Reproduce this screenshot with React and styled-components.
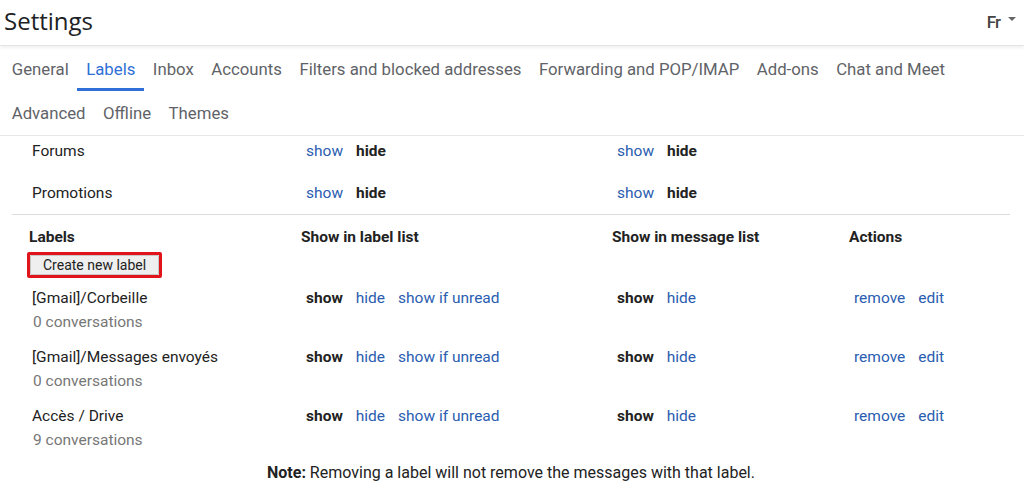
import React from "react";
import styled, { createGlobalStyle } from "styled-components";

const Global = createGlobalStyle`
  html, body { margin: 0; padding: 0; background: #fff; }
  body { font-family: Roboto, "Liberation Sans", Arial, sans-serif; color: #222; overflow: hidden; }
  * { box-sizing: border-box; }
`;

const Page = styled.div`
  width: 1024px;
  height: 491px;
  overflow: hidden;
`;

const TitleBar = styled.div`
  height: 46px;
  display: flex;
  align-items: center;
  justify-content: space-between;
  padding: 0 8px 0 4px;
  border-bottom: 1px solid #e4e4e4;
  box-shadow: 0 2px 3px rgba(0, 0, 0, 0.06);
`;

const Title = styled.h1`
  margin: 0;
  margin-top: -4px;
  font-family: "Open Sans", Roboto, sans-serif;
  font-size: 24px;
  font-weight: 400;
  color: #202124;
`;

const Account = styled.div`
  display: flex;
  align-items: center;
  gap: 8px;
  margin-top: -2px;
  font-size: 17px;
  font-weight: 500;
  color: #444;
  letter-spacing: -1px;
`;

const Caret = styled.span`
  width: 0;
  height: 0;
  border-left: 4px solid transparent;
  border-right: 4px solid transparent;
  border-top: 4px solid #666;
  margin-top: -6px;
`;

const Tabs = styled.nav`
  display: flex;
  flex-wrap: wrap;
  padding: 1px 0 0 3px;
  border-bottom: 1px solid #e8e8e8;
`;

const Break = styled.div`
  flex-basis: 100%;
`;

const Tab = styled.div`
  height: 44px;
  display: flex;
  align-items: center;
  padding: 0 8.75px;
  font-size: 16.75px;
  color: ${(p) => (p.$active ? "#2f6fd6" : "#5f6368")};
  box-shadow: ${(p) => (p.$active ? "inset 0 -3px 0 #2f6fd6" : "none")};
`;

const Content = styled.div`
  padding: 0 14px 0 12px;
  font-size: 15.5px;
`;

const Grid = styled.div`
  display: grid;
  grid-template-columns: 289px 311px 237px 1fr;
  align-items: ${(p) => p.$align || "center"};
`;

const CategoryRow = styled(Grid)`
  height: ${(p) => (p.$first ? "36px" : "42px")};
  padding-bottom: ${(p) => (p.$first ? "7px" : "0")};
`;

const Divider = styled.div`
  height: 1px;
  background: #dcdcdc;
`;

const Name = styled.div`
  padding-left: 20px;
  line-height: 24px;
  color: #222;
`;

const Count = styled.div`
  padding-left: 21px;
  line-height: 24px;
  color: #777;
`;

const Cell = styled.div`
  display: flex;
  gap: 13px;
  padding-left: 5px;
  line-height: 24px;
`;

const Link = styled.span`
  color: #2a5db0;
  cursor: pointer;
`;

const Bold = styled.span`
  font-weight: 700;
  color: #222;
`;

const HeaderRow = styled(Grid)`
  padding-top: 13px;
`;

const Head = styled.div`
  font-weight: 700;
  line-height: 18px;
  padding-left: ${(p) => p.$pad || "0"};
`;

const Highlight = styled.div`
  display: inline-block;
  margin: 6px 0 0 15px;
  border: 3px solid #e1141c;
  border-radius: 2px;
`;

const Button = styled.button`
  display: block;
  height: 20px;
  padding: 0 12px;
  font-family: Roboto, "Liberation Sans", sans-serif;
  font-size: 14px;
  color: #222;
  background: #efefef;
  border: 1px solid #c8c8c8;
  border-radius: 1px;
  line-height: 18px;
`;

const Labels = styled.div`
  padding-top: 8px;
`;

const LabelRow = styled(Grid)`
  padding-bottom: 11px;
  &:last-child { padding-bottom: 0; }
`;

const Note = styled.p`
  margin: 9px 0 0;
  text-align: center;
  font-size: 16px;
  line-height: 24px;
`;

const tabs1 = ["General", "Labels", "Inbox", "Accounts", "Filters and blocked addresses", "Forwarding and POP/IMAP", "Add-ons", "Chat and Meet"];
const tabs2 = ["Advanced", "Offline", "Themes"];

const labels = [
  { name: "[Gmail]/Corbeille", count: "0 conversations" },
  { name: "[Gmail]/Messages envoyés", count: "0 conversations" },
  { name: "Accès / Drive", count: "9 conversations" },
];

export default function App() {
  return (
    <Page>
      <Global />
      <TitleBar>
        <Title>Settings</Title>
        <Account>
          Fr <Caret />
        </Account>
      </TitleBar>
      <Tabs>
        {tabs1.map((t) => (
          <Tab key={t} $active={t === "Labels"}>{t}</Tab>
        ))}
        <Break />
        {tabs2.map((t) => (
          <Tab key={t}>{t}</Tab>
        ))}
      </Tabs>
      <Content>
        <CategoryRow $first>
          <Name>Forums</Name>
          <Cell><Link>show</Link><Bold>hide</Bold></Cell>
          <Cell><Link>show</Link><Bold>hide</Bold></Cell>
          <div />
        </CategoryRow>
        <CategoryRow>
          <Name>Promotions</Name>
          <Cell><Link>show</Link><Bold>hide</Bold></Cell>
          <Cell><Link>show</Link><Bold>hide</Bold></Cell>
          <div />
        </CategoryRow>
        <Divider />
        <HeaderRow $align="start">
          <div>
            <Head $pad="17px">Labels</Head>
            <Highlight><Button>Create new label</Button></Highlight>
          </div>
          <Head>Show in label list</Head>
          <Head>Show in message list</Head>
          <Head>Actions</Head>
        </HeaderRow>
        <Labels>
          {labels.map((l) => (
            <LabelRow key={l.name} $align="start">
              <div>
                <Name>{l.name}</Name>
                <Count>{l.count}</Count>
              </div>
              <Cell><Bold>show</Bold><Link>hide</Link><Link>show if unread</Link></Cell>
              <Cell><Bold>show</Bold><Link>hide</Link></Cell>
              <Cell><Link>remove</Link><Link>edit</Link></Cell>
            </LabelRow>
          ))}
        </Labels>
        <Note><Bold>Note:</Bold> Removing a label will not remove the messages with that label.</Note>
      </Content>
    </Page>
  );
}
